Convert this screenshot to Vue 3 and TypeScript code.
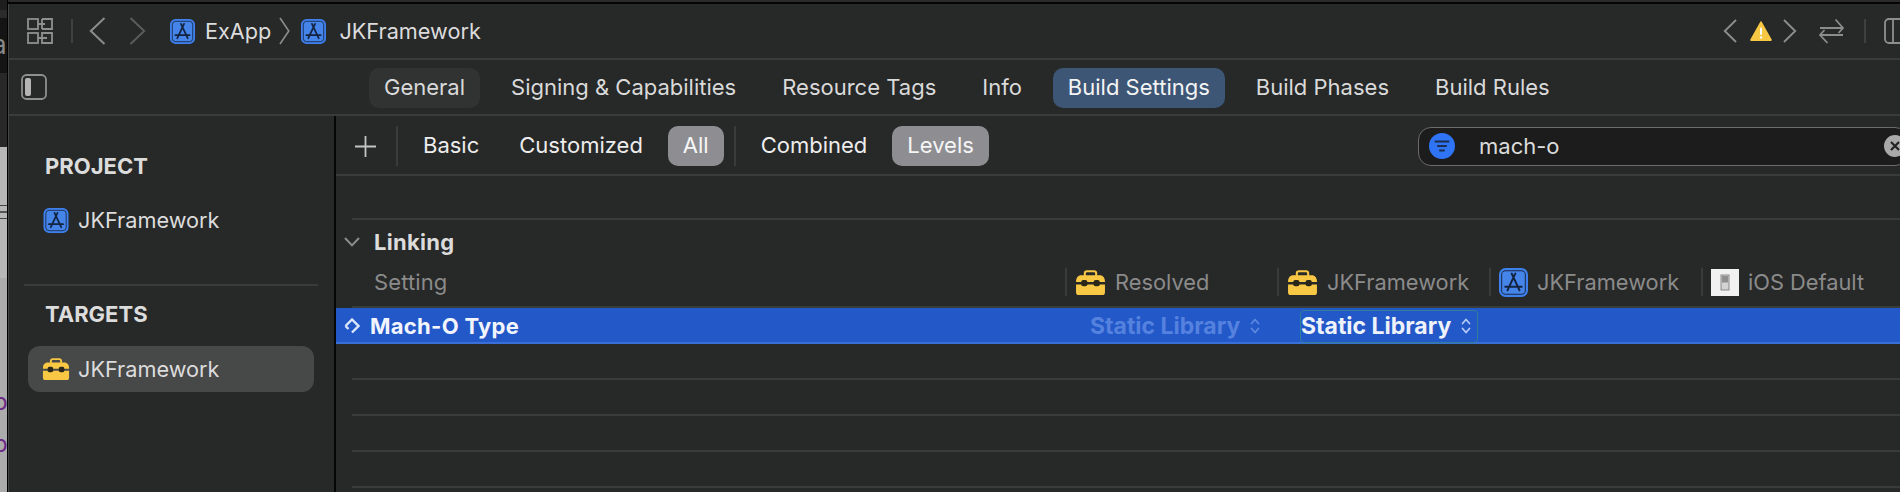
<script setup lang="ts">
const tabs = ['General', 'Signing & Capabilities', 'Resource Tags', 'Info', 'Build Settings', 'Build Phases', 'Build Rules']
const emptyRows = [1, 2, 3, 4]
</script>

<template>
  <div class="page">
    <svg class="defs" width="0" height="0" aria-hidden="true">
      <symbol id="appicon" viewBox="0 0 26 26">
        <rect x="0.8" y="0.8" width="24.4" height="24.4" rx="5" fill="#4585ea" stroke="#3d80ee" stroke-width="1.6" />
        <rect x="2.4" y="2.4" width="21.2" height="21.2" rx="3.4" fill="none" stroke="#17294a" stroke-width="0.9" />
        <path d="M11.4 5 18.4 20M14.6 5 7.6 20M5.6 16.8H20.4" fill="none" stroke="#14233f" stroke-width="1.8" stroke-linecap="round" />
      </symbol>
      <symbol id="boxicon" viewBox="0 0 30 24" preserveAspectRatio="none">
        <path d="M9.5 6V3.4C9.5 2 10.4 1.2 11.6 1.2H18.4C19.6 1.2 20.5 2 20.5 3.4V6" fill="none" stroke="#f8c744" stroke-width="2" />
        <path d="M1 11.2C1 7.4 3 5 6 5H24C27 5 29 7.4 29 11.2V11.6H1Z" fill="#f8c744" />
        <path d="M1 14H29V21.5C29 23 28 24 26.5 24H3.5C2 24 1 23 1 21.5Z" fill="#f8c744" />
        <rect x="6" y="9.6" width="6" height="6" rx="2" fill="#2a2618" />
        <rect x="18" y="9.6" width="6" height="6" rx="2" fill="#2a2618" />
      </symbol>
      <symbol id="updown" viewBox="0 0 10 18">
        <path d="M1.5 6.5 5 2.5 8.5 6.5M1.5 11.5 5 15.5 8.5 11.5" fill="none" stroke="currentColor" stroke-width="1.7" stroke-linecap="round" stroke-linejoin="round" />
      </symbol>
    </svg>

    <div class="backdrop">
      <div class="bd-a"></div>
      <div class="bd-b"></div>
      <div class="bd-c"><span class="bd-letter">a</span></div>
      <div class="bd-d"></div>
      <div class="bd-e">
        <div class="bd-table"></div>
      </div>
      <div class="bd-f">
        <span class="bd-p">p</span>
        <span class="bd-p second">p</span>
      </div>
    </div>

    <div class="window">
      <div class="cap"></div>
      <div class="inner">
        <header class="toolbar">
          <svg class="t-grid" width="26" height="26" viewBox="0 0 26 26" fill="none" stroke="#8f8f8f" stroke-width="1.8">
            <rect x="1" y="1" width="10" height="10" />
            <path d="M15 1H25V11H15M15 1V5M15 7V11M11 6H18" />
            <rect x="1" y="15" width="10" height="10" />
            <path d="M15 15H25V25H15ZM11 20H20" />
          </svg>
          <span class="t-sep"></span>
          <svg class="t-back" width="17" height="28" viewBox="0 0 17 28" fill="none" stroke="#8c8c8c" stroke-width="2">
            <path d="M15.5 1 1.8 14 15.5 27" />
          </svg>
          <svg class="t-fwd" width="17" height="28" viewBox="0 0 17 28" fill="none" stroke="#5b5b5b" stroke-width="2">
            <path d="M1.5 1 15.2 14 1.5 27" />
          </svg>
          <svg class="t-app" width="25" height="25"><use href="#appicon" /></svg>
          <span class="crumb first">ExApp</span>
          <svg class="t-crumb" width="11" height="28" viewBox="0 0 11 28" fill="none" stroke="#8c8c8c" stroke-width="1.6">
            <path d="M1 1 9.8 14 1 27" />
          </svg>
          <svg class="t-app2" width="25" height="25"><use href="#appicon" /></svg>
          <span class="crumb second">JKFramework</span>

          <div class="t-right">
            <svg width="14" height="24" viewBox="0 0 14 24" fill="none" stroke="#8c8c8c" stroke-width="1.9">
              <path d="M13 1 1.8 12 13 23" />
            </svg>
            <svg class="warn" width="22" height="21" viewBox="0 0 22 21">
              <path d="M11 1.4 20.8 19H1.2Z" fill="#f8c744" stroke="#f8c744" stroke-width="2" stroke-linejoin="round" />
              <rect x="10" y="6.6" width="2" height="7.4" rx="1" fill="#fff" />
              <circle cx="11" cy="16.4" r="1.2" fill="#fff" />
            </svg>
            <svg class="warn-next" width="14" height="24" viewBox="0 0 14 24" fill="none" stroke="#8c8c8c" stroke-width="1.9">
              <path d="M1 1 12.2 12 1 23" />
            </svg>
            <svg class="swap" width="25" height="26" viewBox="0 0 25 26" fill="none" stroke="#8c8c8c" stroke-width="1.8">
              <path d="M1 10H24M16.5 1.5 24 10 19.5 15M24 17H1M8.5 25 1 17 5.5 12" />
            </svg>
            <span class="t-sep right"></span>
            <svg class="panel" width="26" height="26" viewBox="0 0 26 26" fill="none" stroke="#8f8f8f" stroke-width="1.8">
              <rect x="1" y="1" width="30" height="24" rx="4" />
              <path d="M9 1V25M16 13H26" />
            </svg>
          </div>
        </header>

        <nav class="tabbar">
          <svg class="toggle" width="26" height="26" viewBox="0 0 26 26">
            <rect x="1" y="1" width="24" height="24" rx="4.5" fill="none" stroke="#8f8f8f" stroke-width="1.8" />
            <rect x="4" y="4" width="6" height="18" rx="2" fill="#b4b4b4" />
          </svg>
          <div class="tabs">
            <span
              v-for="t in tabs"
              :key="t"
              class="tab"
              :class="{ general: t === 'General', active: t === 'Build Settings' }"
            >{{ t }}</span>
          </div>
        </nav>

        <div class="main">
          <aside class="sidebar">
            <h2 class="side-head">PROJECT</h2>
            <div class="side-item project">
              <svg class="side-icon" width="25" height="25"><use href="#appicon" /></svg>
              <span>JKFramework</span>
            </div>
            <div class="side-div"></div>
            <h2 class="side-head targets">TARGETS</h2>
            <div class="side-item selected">
              <svg class="side-icon" width="27" height="22"><use href="#boxicon" /></svg>
              <span>JKFramework</span>
            </div>
          </aside>

          <section class="content">
            <div class="filter">
              <svg class="plus" width="21" height="21" viewBox="0 0 21 21" stroke="#c4c4c4" stroke-width="1.8">
                <path d="M10.5 0V21M0 10.5H21" />
              </svg>
              <span class="f-sep"></span>
              <span class="f-btn">Basic</span>
              <span class="f-btn">Customized</span>
              <span class="f-btn on">All</span>
              <span class="f-sep"></span>
              <span class="f-btn">Combined</span>
              <span class="f-btn on">Levels</span>
              <div class="search">
                <svg width="26" height="26" viewBox="0 0 26 26">
                  <circle cx="13" cy="13" r="13" fill="#2f74f5" />
                  <path d="M6.5 8.5H19.5M9 13H17M11 17.5H15" stroke="#1b2c4c" stroke-width="2" stroke-linecap="round" />
                </svg>
                <span class="query">mach-o</span>
                <svg class="clear" width="22" height="22" viewBox="0 0 22 22">
                  <circle cx="11" cy="11" r="11" fill="#a9a9a9" />
                  <path d="M7 7 15 15M15 7 7 15" stroke="#222" stroke-width="2.2" />
                </svg>
              </div>
            </div>

            <div class="settings">
              <div class="spacer"></div>
              <div class="group">
                <svg class="disclosure" width="16" height="10" viewBox="0 0 16 10" fill="none" stroke="#8c8c8c" stroke-width="2">
                  <path d="M1 1 8 8.4 15 1" />
                </svg>
                <span>Linking</span>
              </div>
              <div class="head-row">
                <span class="head-name">Setting</span>
                <div class="head-col">
                  <svg width="31" height="25"><use href="#boxicon" /></svg>
                  <span>Resolved</span>
                </div>
                <div class="head-col">
                  <svg width="31" height="25"><use href="#boxicon" /></svg>
                  <span>JKFramework</span>
                </div>
                <div class="head-col">
                  <svg width="29" height="29"><use href="#appicon" /></svg>
                  <span>JKFramework</span>
                </div>
                <div class="head-col">
                  <svg class="ios" width="28" height="27" viewBox="0 0 28 27">
                    <rect width="28" height="27" fill="#f1f1f1" />
                    <rect x="10" y="6" width="8" height="15" fill="#d3d3d3" stroke="#8a8a8a" stroke-width="1" />
                    <rect x="11" y="7" width="6" height="6.5" fill="#8f8f8f" />
                  </svg>
                  <span>iOS Default</span>
                </div>
              </div>
              <div class="row-sel">
                <div class="sel-name">
                  <svg class="diamond" width="16" height="16" viewBox="0 0 16 16" fill="none" stroke="#dbe6fb" stroke-width="2.4">
                    <path d="M1.5 8 8 1.5 14.5 8 8 14.5M1.5 8 4.5 11" />
                  </svg>
                  <span>Mach-O Type</span>
                </div>
                <div class="sel-col">
                  <div class="sel-val dim">
                    <span>Static Library</span>
                    <svg class="ud" width="10" height="18"><use href="#updown" /></svg>
                  </div>
                </div>
                <div class="sel-col second">
                  <div class="sel-val box-val">
                    <span>Static Library</span>
                    <svg class="ud" width="10" height="18"><use href="#updown" /></svg>
                  </div>
                </div>
              </div>
              <div v-for="r in emptyRows" :key="r" class="empty"></div>
            </div>
          </section>
        </div>
      </div>
    </div>
  </div>
</template>

<style>
html,
body {
  margin: 0;
  background: #272828;
}
</style>

<style scoped>
.page {
  display: flex;
  width: 1900px;
  height: 492px;
  overflow: hidden;
  background: #272828;
  font-family: Inter, "Liberation Sans", sans-serif;
  font-size: 22px;
  color: #dedede;
}
.defs {
  position: absolute;
}
.backdrop {
  flex: 0 0 7px;
  display: flex;
  flex-direction: column;
  overflow: hidden;
}
.bd-a {
  height: 10px;
  background: #1e1e1e;
}
.bd-b {
  height: 8px;
  background: #2b2b2b;
}
.bd-c {
  height: 55px;
  background: #141414;
  overflow: hidden;
}
.bd-letter {
  display: block;
  margin: 12px 0 0 -8px;
  font-size: 26px;
  line-height: 30px;
  color: #8a8a8a;
}
.bd-d {
  height: 74px;
  background: #282828;
}
.bd-e {
  height: 131px;
  padding-top: 58px;
  box-sizing: border-box;
  background: #b7b7b7;
}
.bd-table {
  height: 14px;
  box-sizing: border-box;
  border-top: 1px solid #444;
  border-bottom: 1px solid #444;
  background: linear-gradient(#b7b7b7 45%, #555 45%, #555 55%, #b7b7b7 55%);
}
.bd-f {
  flex: 1;
  background: #acacac;
  overflow: hidden;
}
.bd-p {
  display: block;
  margin: 111px 0 0 -7px;
  font-size: 24px;
  line-height: 26px;
  color: #6d2a86;
}
.bd-p.second {
  margin-top: 16px;
}
.window {
  flex: 1;
  min-width: 0;
  display: flex;
  flex-direction: column;
  border-left: 1px solid #000;
}
.cap {
  height: 2px;
  border-bottom: 2px solid #050505;
  background: #2a2a2a;
}
.inner {
  flex: 1;
  min-height: 0;
  display: flex;
  flex-direction: column;
  border-left: 1px solid #454646;
}
.toolbar {
  display: flex;
  align-items: center;
  flex: 0 0 54px;
  border-bottom: 2px solid #3a3b3b;
}
.t-grid {
  margin-left: 18px;
}
.t-sep {
  width: 2px;
  height: 24px;
  margin-left: 18px;
  background: #3e3f3f;
}
.t-back {
  margin-left: 16px;
}
.t-fwd {
  margin-left: 23px;
}
.t-app {
  margin-left: 24px;
}
.crumb {
  color: #dcdcdc;
  white-space: nowrap;
  font-size: 21.7px;
}
.crumb.first {
  margin-left: 10px;
}
.t-crumb {
  margin-left: 8px;
}
.t-app2 {
  margin-left: 11px;
}
.crumb.second {
  margin-left: 13px;
}
.t-right {
  display: flex;
  align-items: center;
  margin-left: auto;
  margin-right: -10px;
}
.warn {
  margin-left: 13px;
}
.warn-next {
  margin-left: 11px;
}
.swap {
  margin-left: 22px;
}
.t-sep.right {
  margin-left: 20px;
}
.panel {
  margin-left: 18px;
  flex-shrink: 0;
}
.tabbar {
  display: flex;
  align-items: center;
  flex: 0 0 54px;
  border-bottom: 2px solid #3a3b3b;
}
.toggle {
  margin-left: 12px;
}
.tabs {
  display: flex;
  gap: 16px;
  margin-left: 322px;
  margin-top: 2px;
}
.tab {
  height: 40px;
  padding: 0 15px;
  border-radius: 10px;
  line-height: 38px;
  white-space: nowrap;
  color: #dadada;
}
.tab.general {
  background: #313232;
}
.tab.active {
  background: #3d5676;
  color: #f4f4f4;
}
.main {
  flex: 1;
  min-height: 0;
  display: flex;
}
.sidebar {
  flex: 0 0 325px;
  box-sizing: border-box;
  padding-top: 38px;
}
.side-head {
  height: 24px;
  margin: 0 0 0 36px;
  font-size: 22px;
  line-height: 24px;
  font-weight: 700;
  color: #dcdcdc;
}
.side-head.targets {
  margin-top: 16px;
}
.side-item {
  display: flex;
  align-items: center;
  width: 286px;
  height: 46px;
  margin-left: 19px;
  padding-left: 14px;
  box-sizing: border-box;
  color: #dcdcdc;
  font-size: 21.7px;
}
.side-icon {
  width: 28px;
  margin-right: 8px;
}
.side-item.project {
  margin-top: 19px;
}
.side-item.selected {
  margin-top: 20px;
  background: #474848;
  border-radius: 12px;
}
.side-div {
  width: 294px;
  height: 2px;
  margin: 41px 0 0 15px;
  background: #3a3b3b;
}
.content {
  flex: 1;
  min-width: 0;
  border-left: 2px solid #050505;
  display: flex;
  flex-direction: column;
}
.filter {
  flex: 0 0 60px;
  display: flex;
  align-items: center;
  gap: 10px;
  padding-top: 2px;
  box-sizing: border-box;
  border-bottom: 2px solid #3a3b3b;
}
.plus {
  margin-left: 19px;
  margin-right: 10px;
}
.f-sep {
  width: 2px;
  height: 40px;
  background: #3a3b3b;
}
.f-btn {
  height: 40px;
  padding: 0 15px;
  border-radius: 10px;
  line-height: 38px;
  white-space: nowrap;
  color: #ededed;
}
.f-btn.on {
  background: #8e8e92;
  color: #f6f6f6;
}
.search {
  display: flex;
  align-items: center;
  flex: 0 0 490px;
  height: 39px;
  margin-left: auto;
  margin-right: -8px;
  padding: 0 1px 0 10px;
  box-sizing: border-box;
  background: #1c1c1c;
  border: 1.5px solid #6b6b6b;
  border-radius: 13px;
}
.query {
  margin-left: 24px;
  color: #dcdcdc;
}
.clear {
  margin-left: auto;
}
.settings {
  flex: 1;
  min-height: 0;
}
.spacer {
  height: 42px;
  margin-left: 16px;
  border-bottom: 2px solid #3a3b3b;
}
.group {
  display: flex;
  align-items: center;
  height: 44px;
  padding-left: 8px;
  font-weight: 700;
  letter-spacing: 0.3px;
  color: #dcdcdc;
}
.disclosure {
  margin-right: 14px;
}
.head-row {
  display: flex;
  align-items: center;
  margin-left: 16px;
  border-bottom: 2px solid #3a3b3b;
  padding-bottom: 6px;
  box-sizing: border-box;
  height: 44px;
  color: #8b8b8b;
}
.head-name {
  flex: 0 0 713px;
  padding-left: 22px;
  box-sizing: border-box;
  letter-spacing: 0.1px;
}
.head-col {
  flex: 0 0 212px;
  display: flex;
  align-items: center;
  gap: 9px;
  height: 28px;
  box-sizing: border-box;
  padding-left: 8px;
  border-left: 2px solid #3a3b3b;
  white-space: nowrap;
  font-size: 21.8px;
}
.row-sel {
  display: flex;
  align-items: center;
  height: 36px;
  background: #2358c9;
  box-shadow: inset 0 -2px 0 #3a6fd8;
  font-weight: 700;
  color: #f2f5fc;
}
.sel-name {
  flex: 0 0 729px;
  display: flex;
  align-items: center;
  padding-left: 8px;
  box-sizing: border-box;
  letter-spacing: 0.3px;
}
.diamond {
  margin-right: 10px;
}
.sel-col {
  flex: 0 0 212px;
  padding-left: 25px;
  box-sizing: border-box;
  font-size: 23px;
}
.sel-col.second {
  padding-left: 23px;
}
.sel-val {
  display: inline-flex;
  align-items: center;
  white-space: nowrap;
}
.sel-val.dim {
  color: #5482de;
}
.sel-val.box-val {
  height: 33px;
  padding: 0 6px 0 0;
  box-sizing: border-box;
  border: 1.5px solid #2f7f96;
  border-radius: 4px;
  color: #eef2fb;
}
.ud {
  margin-left: 10px;
  color: #b8cdf5;
}
.dim .ud {
  color: #5d89e0;
}
.empty {
  height: 36px;
  box-sizing: border-box;
  margin-left: 16px;
  border-bottom: 2px solid #3a3b3b;
}
</style>
